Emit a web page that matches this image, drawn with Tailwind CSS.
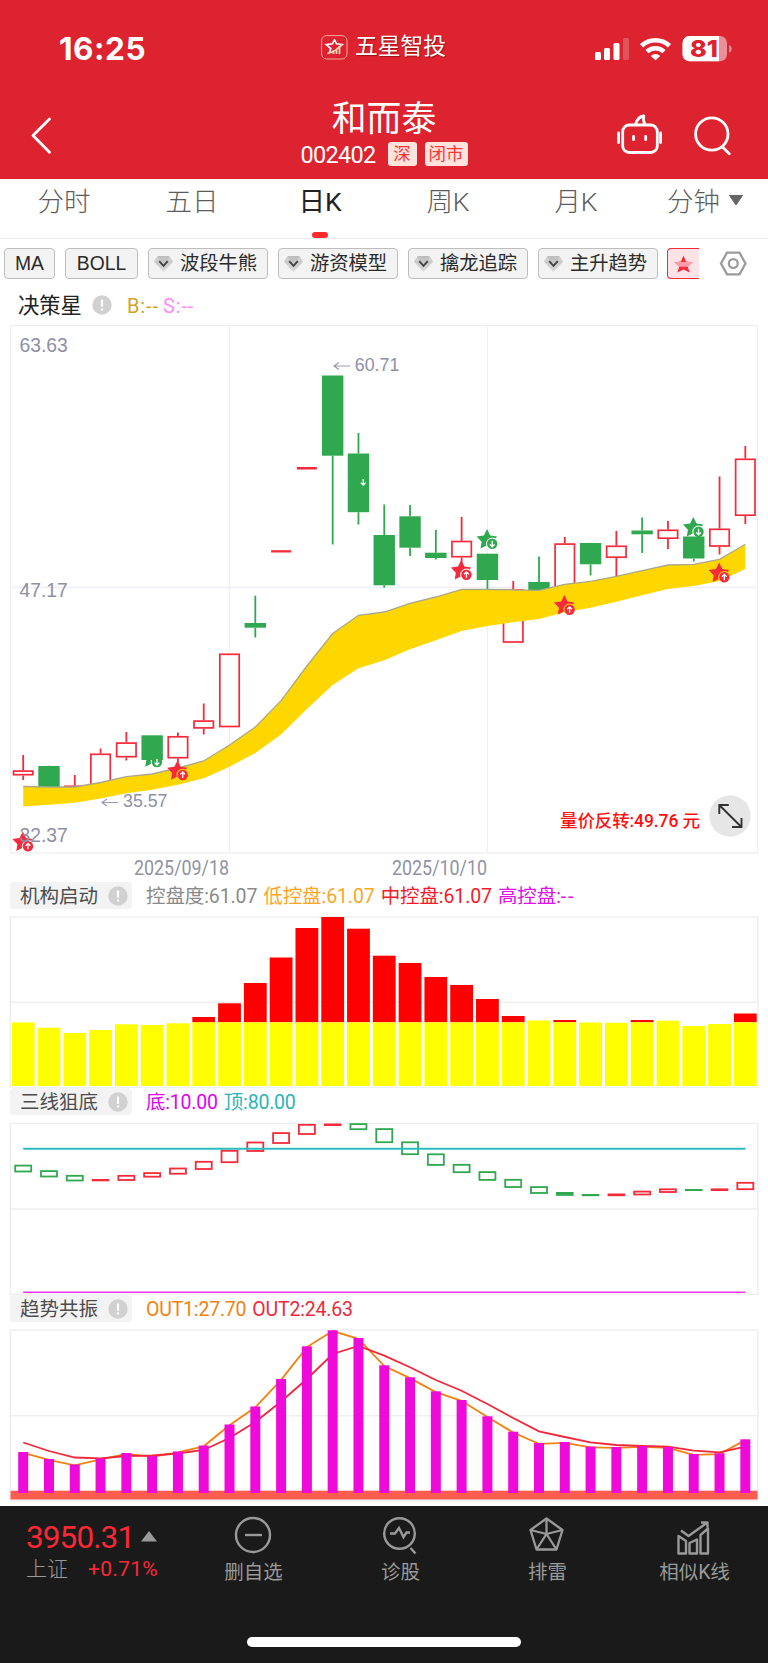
<!DOCTYPE html>
<html lang="zh-CN">
<head>
<meta charset="utf-8">
<title>和而泰 002402</title>
<script src="https://cdn.jsdelivr.net/npm/@tailwindcss/browser@4"></script>
</head>
<body class="w-[768px] bg-white font-['Roboto','Noto_Sans_CJK_SC',sans-serif] overflow-x-hidden">

<header class="h-[179px] bg-[#dc232f] text-white flex flex-col">
  <div class="h-[92px] flex items-center justify-between pl-[59px] pr-[36px] whitespace-nowrap">
    <div class="w-[116px] pt-[6px] font-['Inter'] font-bold text-[31.500px] leading-none tracking-[0.500px]">16:25</div>
    <div class="flex items-center gap-[7px] pt-[2px]">
      <svg width="27" height="25" viewBox="0 0 27 25" fill="none" stroke="#ffd9b8">
        <rect x=".6" y=".6" width="25.4" height="23.4" rx="5" stroke="#f5a69c" stroke-width="1"/>
        <path d="M13.500 4.500l2 4.300 5.800.7-5 4.200M13.500 4.500l-2 4.300-6.300.8 4.600 4-1.200 3.600" stroke="#fff" stroke-width="1.600"/>
        <path d="M6.500 18.500c5-1 10-4 14.500-9M9.500 19v-2.500M12.500 19v-4M15.500 19v-5M18.500 19v-7" stroke-width="1.700"/>
      </svg>
      <span class="text-[22.800px] leading-none font-normal [text-shadow:1px_1px_1px_rgba(90,0,0,.5)]">五星智投</span>
    </div>
    <svg class="mt-[5px]" width="140" height="30" viewBox="592 34 140 30">
      <g fill="#fff"><rect x="595" y="52" width="6" height="8" rx="1.500"/><rect x="604" y="48" width="6" height="12" rx="1.500"/><rect x="613.500" y="43" width="6" height="17" rx="1.500"/><rect x="623" y="38" width="6" height="22" rx="1.500" opacity=".22"/></g>
      <g fill="none" stroke="#fff" stroke-width="4.600"><path d="M641.500 45.800a20.500 20.500 0 0 1 28 0"/><path d="M647 51.600a12.500 12.500 0 0 1 17 0"/></g>
      <path d="M650.800 55.900a7 7 0 0 1 9.400 0l-4.700 4.300z" fill="#fff"/>
      <rect x="682.500" y="36" width="44.500" height="25.300" rx="7" fill="#ed8f97"/>
      <path d="M689.500 36H719v25.300h-29.500a7 7 0 0 1-7-7V43a7 7 0 0 1 7-7z" fill="#fff"/>
      <path d="M729 45c3.500 1.500 3.500 6.200 0 7.700z" fill="#ed8f97"/>
      <text x="690" y="56.800" font-family="Inter" font-weight="800" font-size="22.500" textLength="28" lengthAdjust="spacingAndGlyphs" fill="#dc232f">81</text>
    </svg>
  </div>
  <div class="h-[87px] flex justify-between items-start">
    <svg class="mt-[24px] ml-[30px] mr-[79px]" width="24" height="40" viewBox="30 116 24 40"><path d="M49.500 119L33 135.500 49.500 152.300" fill="none" stroke="#fff" stroke-width="2.800" stroke-linecap="round" stroke-linejoin="round"/></svg>
    <div class="flex flex-col items-center pt-[9px] pl-[20px]">
      <div class="text-[34.800px] leading-[36px] font-normal">和而泰</div>
      <div class="mt-[5px] flex items-center h-[24px]">
        <span class="mt-[3px] text-[23.500px] leading-none tracking-[-0.700px] font-normal">002402</span>
        <span class="ml-[12px] w-[29px] h-[24px] rounded-[3px] bg-[#ffe3dc] text-[#ff3535] text-[17.500px] leading-[24px] text-center">深</span>
        <span class="ml-[8px] w-[43px] h-[24px] rounded-[3px] bg-[#ffe3dc] text-[#ff3535] text-[17.500px] leading-[24px] text-center">闭市</span>
      </div>
    </div>
    <svg class="mt-[20px] mr-[34px]" width="119" height="46" viewBox="615 112 119 46" fill="none" stroke="#fff" stroke-width="2.800" stroke-linecap="round" stroke-linejoin="round">
      <rect x="622.700" y="125" width="34.600" height="27.500" rx="6.500"/>
      <path d="M635.500 124.500c1.500-5.500 3.500-8 8.300-8.500-.8 3-.3 5.500 1.200 8.500"/>
      <path d="M618.600 133v9.500M660.600 133v9.500"/><path d="M633.500 136.500v3.200M645.700 136.500v3.200"/>
      <circle cx="711.800" cy="134" r="16.200"/><path d="M722 146.500l7.300 7.300"/>
    </svg>
  </div>
</header>

<nav class="h-[60px] border-b-[1.500px] border-[#ebebee] grid grid-cols-6 text-[26.500px] text-[#5c5c5c] leading-[46px] text-center font-light">
  <div>分时</div>
  <div>五日</div>
  <div class="flex flex-col items-center text-[#222] font-normal"><span class="h-[53px]">日K</span><i class="block w-[16px] h-[6px] rounded-[3px] bg-[#ff2b2b]"></i></div>
  <div>周K</div>
  <div>月K</div>
  <div class="flex justify-center gap-[8px] pl-[3px]">分钟<svg class="mt-[16px]" width="16" height="11" viewBox="0 0 16 11"><path d="M1.500 .5h13L8 10z" fill="#666" stroke="#666" stroke-linejoin="round"/></svg></div>
</nav>

<svg width="0" height="0" class="absolute">
  <defs>
    <linearGradient id="gem" x1="0" y1="0" x2="0" y2="1"><stop offset="0" stop-color="#bcbcbc"/><stop offset="1" stop-color="#dcdcdc"/></linearGradient>
    <g id="diamond"><path d="M4 1h12l4 6-10 11L0 7z" fill="url(#gem)"/><path d="M4 1L0 7h5.500L10 18M16 1l4 6h-5.500L10 18" fill="#cfcfcf"/><path d="M5.500 6.500L10 11.500l4.500-5" fill="none" stroke="#444" stroke-width="2"/></g>
    <g id="info"><circle cx="10" cy="10" r="9.700" fill="#d1d1d1"/><path d="M10 4.500v7.200M10 13.600v2" stroke="#fff" stroke-width="2.200"/></g>
  </defs>
</svg>

<div class="h-[48px] pt-[9px] pl-[4px] flex items-start text-[19.300px] leading-[30px] text-[#2b2b2b] whitespace-nowrap">
  <div class="w-[665px] mr-[30px] flex gap-[10px] font-light">
    <div class="w-[51px] h-[31px] shrink-0 border border-[#bdbdbd] rounded-[4px] bg-[#f3f3f3] text-center font-['Liberation_Sans']">MA</div>
    <div class="w-[73px] h-[31px] shrink-0 border border-[#bdbdbd] rounded-[4px] bg-[#f3f3f3] text-center font-['Liberation_Sans']">BOLL</div>
    <div class="w-[120px] h-[31px] shrink-0 border border-[#bdbdbd] rounded-[4px] bg-[#f3f3f3] pl-[5px] flex gap-[7px] font-normal"><svg class="mt-[6px] shrink-0" width="19" height="18" viewBox="0 0 20 19"><use href="#diamond"/></svg>波段牛熊</div>
    <div class="w-[120px] h-[31px] shrink-0 border border-[#bdbdbd] rounded-[4px] bg-[#f3f3f3] pl-[5px] flex gap-[7px] font-normal"><svg class="mt-[6px] shrink-0" width="19" height="18" viewBox="0 0 20 19"><use href="#diamond"/></svg>游资模型</div>
    <div class="w-[120px] h-[31px] shrink-0 border border-[#bdbdbd] rounded-[4px] bg-[#f3f3f3] pl-[5px] flex gap-[7px] font-normal"><svg class="mt-[6px] shrink-0" width="19" height="18" viewBox="0 0 20 19"><use href="#diamond"/></svg>擒龙追踪</div>
    <div class="w-[120px] h-[31px] shrink-0 border border-[#bdbdbd] rounded-[4px] bg-[#f3f3f3] pl-[5px] flex gap-[7px] font-normal"><svg class="mt-[6px] shrink-0" width="19" height="18" viewBox="0 0 20 19"><use href="#diamond"/></svg>主升趋势</div>
    <div class="w-[32px] h-[31px] -ml-px shrink-0 border border-r-0 border-[#f52a3a] rounded-l-[4px] bg-[#fde3e6]"><svg class="mt-[6px] ml-[6px]" width="19" height="18" viewBox="0 0 19 18"><path d="M9.500 .5L12 6.500l6.500.8-4.800 4.500 2 5.700-6.200-3-6.200 3 2-5.700L.5 7.300 7 6.500z" fill="#f52a3a"/><path d="M.5 7h18l-4.800 4.800H5.300z" fill="#ff9ea8"/></svg></div>
  </div>
  <svg class="mt-[2px] ml-[20px]" width="28" height="28" viewBox="719 250 28 28" fill="none" stroke="#9b9b9b" stroke-width="2.300"><path d="M727 252.700h12.500l6 10.800-6 10.800H727l-6-10.800z"/><circle cx="733.300" cy="263.500" r="4.400"/></svg>
</div>

<div class="h-[36px] pl-[18px] flex items-center text-[20px] leading-none">
  <span class="mt-[2px] text-[21.300px] font-normal text-[#222]">决策星</span>
  <svg class="ml-[10px]" width="20" height="20"><use href="#info"/></svg>
  <span class="ml-[15px] mt-[2px] text-[#cfa32c] tracking-[0.900px]">B:--</span>
  <span class="ml-[4px] mt-[2px] text-[#ff8cff] tracking-[0.900px]">S:--</span>
</div>

<svg id="price" class="block" width="768" height="559" viewBox="0 323 768 559">
  <defs>
    <mask id="notch" maskUnits="userSpaceOnUse" x="-14" y="-4" width="30" height="30"><rect x="-14" y="-4" width="30" height="30" fill="#fff"/><circle cx="5.200" cy="14.300" r="6.200" fill="#000"/></mask>
    <path id="starShape" mask="url(#notch)" d="M0-.5L3.200 6 10 7 5.500 12.200 6.600 19 0 15.800-6.500 19-5.400 12.200-10.400 7-3.200 6z"/>
  </defs>
  <g fill="none" stroke="#efeff5" stroke-width="1.300"><rect x="10.500" y="325.500" width="747" height="527.500"/><path d="M10.500 587.500H757.500M229.500 326V853M487.500 326V853"/></g>
  <g id="candles"></g>
  <g id="ribbon"></g>
  <g id="stars"></g>
  <g font-family="Liberation Sans" font-size="19.300" fill="#8e90a6">
    <text x="19.500" y="351.700">63.63</text><text x="19.500" y="597">47.17</text><text x="19.500" y="841.700">32.37</text>
    <text x="354.800" y="371" font-size="17.800">60.71</text><text x="123" y="807" font-size="17.800">35.57</text>
  </g>
  <path d="M350 366H334M339 362.500L334 366l5 3.500M118 802.500H102M107 799l-5 3.500 5 3.500" fill="none" stroke="#9a9bae" stroke-width="1.200"/>
  <g font-family="Roboto" font-size="20.500" font-weight="400" fill="#9092a5"><text x="134" y="875" textLength="95" lengthAdjust="spacingAndGlyphs">2025/09/18</text><text x="392" y="875" textLength="95" lengthAdjust="spacingAndGlyphs">2025/10/10</text></g>
  <text x="560" y="826.500" font-family="Roboto, Noto Sans CJK SC" font-size="17.500" font-weight="500" fill="#ff1010" textLength="140">量价反转:49.76 元</text>
  <circle cx="730" cy="816" r="20.700" fill="#e6e6e6"/>
  <path d="M719.500 805.300l21.700 21.400M719.300 814v-9h9.500M741.500 818v9H732" fill="none" stroke="#333" stroke-width="1.900"/>
</svg>

<div class="h-[27px] pl-[10px] flex items-center text-[19.500px] leading-[29px] whitespace-nowrap">
  <div class="w-[122px] h-[27px] rounded-[4px] bg-[#f3f3f3] text-[#4c4c4c] flex items-center pl-[10px] gap-[10px]"><span class="mt-[2px]">机构启动</span><svg width="20" height="20"><use href="#info"/></svg></div>
  <div class="ml-[14px] mt-[2px] flex gap-[6px] tracking-[-0.100px]">
    <span class="text-[#8a8a8a]">控盘度:61.07</span><span class="text-[#ffa51f]">低控盘:61.07</span><span class="text-[#f51a2a]">中控盘:61.07</span><span class="text-[#dd10e6]">高控盘:<span class="tracking-[1.800px]">--</span></span>
  </div>
</div>
<svg id="control" class="block" width="768" height="179" viewBox="0 909 768 179">
  <g fill="none" stroke="#efeff1" stroke-width="1.500"><rect x="10.300" y="917" width="747.500" height="170.500"/><path d="M10.500 1002.300H757.500"/></g>
</svg>

<div class="h-[27px] pl-[10px] flex items-center text-[19.500px] leading-[29px] whitespace-nowrap">
  <div class="w-[122px] h-[27px] rounded-[4px] bg-[#f3f3f3] text-[#4c4c4c] flex items-center pl-[10px] gap-[10px]"><span class="mt-[2px]">三线狙底</span><svg width="20" height="20"><use href="#info"/></svg></div>
  <div class="ml-[14px] mt-[2px] flex gap-[6px] tracking-[-0.200px]"><span class="text-[#e600f0]">底:10.00</span><span class="text-[#2bb5b5]">顶:80.00</span></div>
</div>
<svg id="three" class="block" width="768" height="180" viewBox="0 1115 768 180">
  <g fill="none" stroke="#efeff1" stroke-width="1.500"><rect x="10.300" y="1123.500" width="747.500" height="170.800"/><path d="M10.500 1209H757.500"/></g>
</svg>

<div class="h-[27px] pl-[10px] flex items-center text-[19.500px] leading-[29px] whitespace-nowrap">
  <div class="w-[122px] h-[27px] rounded-[4px] bg-[#f3f3f3] text-[#4c4c4c] flex items-center pl-[10px] gap-[10px]"><span class="mt-[2px]">趋势共振</span><svg width="20" height="20"><use href="#info"/></svg></div>
  <div class="ml-[14px] mt-[2px] flex gap-[6px] tracking-[-0.200px]"><span class="text-[#f28210]">OUT1:27.70</span><span class="text-[#f0283a]">OUT2:24.63</span></div>
</div>
<svg id="trend" class="block" width="768" height="184" viewBox="0 1322 768 184">
  <g fill="none" stroke="#efeff1" stroke-width="1.500"><rect x="10.300" y="1330" width="747.500" height="170.800"/><path d="M10.500 1415.700H757.500"/></g>
</svg>

<footer class="h-[157px] bg-[#1a1a1a] text-[#999] flex flex-col justify-between items-center">
  <div class="w-full flex items-start">
    <div class="w-[180px] pl-[26px] pt-[18px] whitespace-nowrap">
      <div class="flex items-center text-[#fa2836] text-[31.500px] leading-[28px] tracking-[-0.900px]">3950.31<svg class="ml-[7px] -mt-[4px]" width="16" height="11"><path d="M8 0l8 10.500H0z" fill="#999"/></svg></div>
      <div class="flex items-center text-[21px] leading-[26px] mt-[3px] font-light"><span class="mt-px">上证</span><span class="ml-[20px] text-[#fa2836] font-normal tracking-[0.300px]">+0.71%</span></div>
    </div>
    <div class="w-[147px] flex flex-col items-center pt-[8px]"><svg width="40" height="42" viewBox="0 0 40 42" fill="none" stroke="#999" stroke-width="2.400"><circle cx="19" cy="21" r="17"/><path d="M11 21h17"/></svg><span class="mt-[5px] text-[19.500px] leading-[24px]">删自选</span></div>
    <div class="w-[147px] flex flex-col items-center pt-[8px]"><svg width="40" height="42" viewBox="0 0 40 42" fill="none" stroke="#999" stroke-width="2.400"><circle cx="18.500" cy="19.500" r="15.300"/><path d="M9 19.500h5l4-5.500 4.500 9 3-4.500h3.500M29.500 34l5 5.500"/></svg><span class="mt-[5px] text-[19.500px] leading-[24px]">诊股</span></div>
    <div class="w-[147px] flex flex-col items-center pt-[8px]"><svg width="40" height="42" viewBox="0 0 40 42" fill="none" stroke="#999" stroke-width="2.300" stroke-linejoin="round"><path d="M18.500 4.500l16 11.500-6 19.500h-20L2.500 16z"/><path d="M18.500 4.500v15.500M2.500 16l16 4M34.500 16l-16 4M8.500 35.500l10-15.500M28.500 35.500l-10-15.500"/></svg><span class="mt-[5px] text-[19.500px] leading-[24px]">排雷</span></div>
    <div class="w-[147px] flex flex-col items-center pt-[8px]"><svg width="40" height="42" viewBox="0 0 40 42" fill="none" stroke="#999" stroke-width="2.400" stroke-linejoin="round"><path d="M3.500 22l7.500 5v12.500H3.500zM14.500 29l7.500-3.500v14h-7.500zM25.500 21l7.500-6.500v25h-7.500zM6 16.500l7.500 5.500L31 9.500M26 8.500h6.500v5"/></svg><span class="mt-[5px] text-[19.500px] leading-[24px]">相似K线</span></div>
  </div>
  <div class="w-[274px] h-[10px] mb-[16px] rounded-full bg-white"></div>
</footer>

<script>
const RED = '#f52a3a', GREEN = '#2fa84f';
const X = i => 23.2 + 25.79 * i;
const add = (id, s) => document.getElementById(id).insertAdjacentHTML('beforeend', s);
const points = a => a.map((y, i) => X(i).toFixed(1) + ',' + y).join(' ');

// [rising, body top, body bottom, high, low]
const candles = [[1,770.3,775.500,755,780],[0,766,789,765.700,789],[1,785.500,790,775,790],[1,753.500,790,748.500,790],[1,742.300,757.500,732,760.500],[0,735.300,760,735.300,760],[1,736,758.500,732.500,762],[1,720.300,728.700,703.500,734.500],[1,653.500,727.300,653.500,727.300],[0,623,627.700,595.700,637.500],[1,550.200,552.500,550,552.500],[1,467,469.500,467,469.500],[0,375.500,455.700,375.500,544.500],[0,453.500,512.200,433,524.500],[0,535,585.300,504.500,587.700],[0,516.300,547.700,505,556],[0,552.700,558,529.700,559.500],[1,540.700,557.500,517,565],[0,553.700,580,553.700,589],[1,589,642.800,581,642.800],[0,582,593,556.500,593],[1,543.300,595,537,595],[0,543,564.300,543,575.500],[1,545.500,558,531,578],[0,530.500,534.300,517.500,553],[1,529.500,539,521,549],[0,536.500,558.500,536.500,561.500],[1,528.500,546.800,476.500,554.500],[1,458.500,516,446,524]];
add('candles', candles.map(([up, t, b, h, l], i) => {
  const x = X(i), c = up ? RED : GREEN;
  if (up && b - t < 3) return `<rect x="${x-10}" y="${t}" width="20" height="${b-t}" fill="${c}"/>`;
  const wick = `<path d="M${x} ${h}V${t}M${x} ${b}V${l}" stroke="${c}" stroke-width="1.800"/>`;
  return wick + (up
    ? `<rect x="${x-9.7}" y="${t+.8}" width="19.400" height="${b-t-1.6}" fill="#fff" stroke="${c}" stroke-width="1.700"/>`
    : `<rect x="${x-10.7}" y="${t}" width="21.400" height="${b-t}" fill="${c}"/>`);
}).join(''));

const upper = [786.5,787,787,782.5,776.7,774,768,761,745,727,700.7,666,633.5,615.3,612,603.3,597,589.3,589.3,589.8,590.3,584.3,581.3,576.3,570.7,565,564.3,559.3,544.3];
const lower = [806.5,804.7,802.7,798.5,793.3,789.7,784.7,778.3,766.7,753,734.5,709,685,668.3,660.3,649.3,640.3,631,626,622.3,619,612.3,607.7,601.7,595.3,589,586,581,569];
add('ribbon', `<polygon points="${points(upper)} ${lower.map((y, i) => X(i) + ',' + y).reverse().join(' ')}" fill="#ffd700"/><polyline points="${points(upper)}" fill="none" stroke="#aaa88c" stroke-width="1.300"/>`);

// [index, top, is buy signal]
add('stars', [[0,832,1],[5,747.7,0],[6,760.7,1],[13,467.7,0],[17,560.5,1],[18,529.5,0],[21,595.5,1],[26,517.5,0],[27,563,1]].map(([i, y, buy]) => {
  const c = buy ? RED : GREEN;
  return `<g transform="translate(${X(i)-.4} ${y})"><use href="#starShape" fill="${c}"/><circle cx="5.200" cy="14.300" r="5.200" fill="${c}"/><path d="${buy ? 'M5.200 17.300v-6M2.800 13.700l2.400-2.400 2.400 2.400' : 'M5.200 11.300v6M2.800 14.900l2.400 2.400 2.400-2.400'}" fill="none" stroke="#fff" stroke-width="1.300"/></g>`;
}).join(''));

const control = [1022.5,1027.7,1033,1030,1024.3,1025,1023.3,1017,1003.3,983,957.5,928,917,928.7,955.7,963,977,985,999,1016,1020.5,1020,1022.5,1022.8,1020,1020.7,1026,1024,1013.5];
const yellowOnly = [20, 25];
add('control', control.map((y, i) => {
  const base = y < 1022 && !yellowOnly.includes(i) ? 1022.3 : y;
  return (base > y ? `<rect x="${X(i)-11.4}" y="${y}" width="22.800" height="${base-y}" fill="#f00"/>` : '') + `<rect x="${X(i)-11.4}" y="${base}" width="22.800" height="${1086-base}" fill="#ff0"/>`;
}).join(''));

const three = [[0,1164.8,1172.3],[0,1170.3,1177.3],[0,1175,1181.3],[1,1179,1181.3],[1,1175,1180.8],[1,1172.3,1177.5],[1,1167.7,1174.5],[1,1161,1169.8],[1,1150,1163],[1,1141.7,1151.8],[1,1132.3,1143.8],[1,1124,1134.8],[1,1123.5,1126],[0,1123.3,1130],[0,1128.3,1143],[0,1141.5,1155],[0,1153.5,1165.7],[0,1164,1173],[0,1171.3,1180.7],[0,1179,1187.8],[0,1186.3,1193.8],[0,1192,1195.8],[0,1194,1196.2],[1,1193.5,1196.2],[1,1190.8,1195.3],[1,1188.5,1192.8],[0,1189,1191],[1,1188.4,1191],[1,1182,1190]];
add('three', three.map(([up, t, b], i) => {
  const c = up ? RED : GREEN, h = b - t;
  return h < 4 ? `<rect x="${X(i)-8.8}" y="${t}" width="17.600" height="${h}" fill="${c}"/>` : `<rect x="${X(i)-8}" y="${t+.8}" width="16" height="${h-1.6}" fill="none" stroke="${c}" stroke-width="1.800"/>`;
}).join('') + '<path d="M23.200 1148.700H745.500" stroke="#2cbcc0" stroke-width="2"/><path d="M23.200 1292.300H745.500" stroke="#ee35f0" stroke-width="1.400"/>');

const bars = [1452,1459,1464.5,1458.5,1453,1456,1451.5,1445.5,1424.5,1406.5,1379,1346.3,1330.3,1338,1365.3,1377.3,1391.3,1400,1416.3,1431.7,1443,1442,1446.5,1447,1446,1447,1454,1453.3,1439.3];
const slow = [1442.5,1451,1457.5,1458.3,1456,1455.5,1453.5,1450,1438,1422,1401.5,1379,1354,1346,1355.7,1367.3,1380,1390.7,1404,1418,1431.3,1437,1442.3,1445,1446,1446.7,1450.7,1452.3,1446.7];
add('trend', `<rect x="10.500" y="1490.700" width="747" height="8.800" fill="#ff5c50"/><polyline points="${points(bars.map(y => y + .8))}" fill="none" stroke="#f28210" stroke-width="1.800"/><polyline points="${points(slow)}" fill="none" stroke="#f0283a" stroke-width="1.800"/>` +
  bars.map((y, i) => `<rect x="${X(i)-5}" y="${y}" width="10" height="${1493-y}" fill="#f00ada"/>`).join(''));
</script>
</body>
</html>
